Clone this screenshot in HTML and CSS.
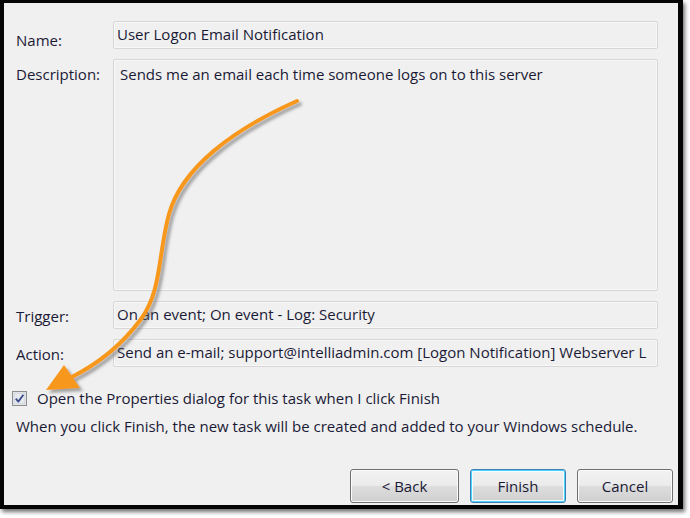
FILE: index.html
```html
<!DOCTYPE html>
<html>
<head>
<meta charset="utf-8">
<link rel="stylesheet" href="styles.css">
</head>
<body>
<div class="window">
  <div class="form">
    <div class="label first">Name:</div>
    <div class="field">User Logon Email Notification</div>
    <div class="label">Description:</div>
    <div class="field area">Sends me an email each time someone logs on to this server</div>
    <div class="label">Trigger:</div>
    <div class="field">On an event; On event - Log: Security</div>
    <div class="label">Action:</div>
    <div class="field">Send an e-mail; support@intelliadmin.com [Logon Notification] Webserver L</div>
  </div>
  <div class="check-row">
    <svg class="checkbox" width="15" height="15" viewBox="0 0 15 15">
      <rect x="0.5" y="0.5" width="14" height="14" fill="#f4f4f4" stroke="#8f8f8f"/>
      <rect x="2" y="2" width="11" height="11" fill="#e6e9ee" stroke="#c4cad3" stroke-width="0.8"/>
      <path d="M3.8 7.6 L6.3 10.6 L11.4 3.8" fill="none" stroke="#3b4d86" stroke-width="1.8" stroke-linejoin="round"/>
    </svg>
    <span>Open the Properties dialog for this task when I click Finish</span>
  </div>
  <p class="info">When you click Finish, the new task will be created and added to your Windows schedule.</p>
  <div class="buttons">
    <div class="btn back">&lt; Back</div>
    <div class="btn default">Finish</div>
    <div class="btn">Cancel</div>
  </div>
</div>
<svg class="arrow" width="690" height="518" viewBox="0 0 690 518">
  <defs>
    <filter id="sh" x="-20%" y="-20%" width="140%" height="140%">
      <feDropShadow dx="3" dy="3" stdDeviation="1.6" flood-color="#606060" flood-opacity="0.55"/>
    </filter>
  </defs>
  <g filter="url(#sh)">
    <path d="M297 101 C232 130 182 168 169 214 C158 254 162 290 141 319 C122 345 98 364 70 378" fill="none" stroke="#f7981d" stroke-width="4" stroke-linecap="round"/>
    <path d="M46 390 L64 365 L80 388 Z" fill="#f7981d"/>
  </g>
</svg>
</body>
</html>
```
FILE: styles.css
```css
html, body {
  margin: 0;
  padding: 0;
  background: #ffffff;
}
body {
  width: 690px;
  height: 518px;
  position: relative;
  overflow: hidden;
  font-family: "Open Sans", "Noto Sans", sans-serif;
  font-size: 15px;
  color: #1a1a36;
}
.window {
  box-sizing: border-box;
  width: 683px;
  height: 509px;
  border-style: solid;
  border-color: #050505;
  border-width: 3px 5px 4px 4px;
  background: #f0f0f0;
  box-shadow: 2px 3px 4px rgba(0,0,0,0.55);
  display: flex;
  flex-direction: column;
  padding: 18px 5px 2px 12px;
}
.form {
  display: grid;
  grid-template-columns: 97px 1fr;
  grid-template-rows: 28px 232px 28px 28px;
  row-gap: 10px;
  margin-right: 15px;
}
.label {
  padding-top: 5px;
  line-height: 20px;
  white-space: nowrap;
}
.label.first {
  padding-top: 9px;
}
.field {
  box-sizing: border-box;
  border: 1px solid #d6d6d6;
  box-shadow: inset 0 0 0 1px #f8f8f8;
  border-radius: 2px;
  background: #f0f0f0;
  padding: 2px 3px 0 3px;
  line-height: 20px;
  white-space: nowrap;
  overflow: hidden;
}
.field.area {
  padding: 4px 6px;
  white-space: normal;
}
.check-row {
  display: flex;
  align-items: center;
  gap: 10px;
  margin: 21px 0 0 -4px;
  line-height: 20px;
}
.checkbox {
  flex: none;
}
.info {
  margin: 8px 0 0 0;
  line-height: 20px;
}
.buttons {
  margin-top: auto;
  display: flex;
  justify-content: flex-end;
  gap: 11px;
}
.btn {
  box-sizing: border-box;
  width: 96px;
  height: 34px;
  border: 1px solid #707070;
  border-radius: 3px;
  background: linear-gradient(#f2f2f2 0%, #ebebeb 48%, #dddddd 52%, #cfcfcf 100%);
  box-shadow: inset 0 0 0 1px #fbfbfb;
  display: flex;
  align-items: center;
  justify-content: center;
  padding-bottom: 1px;
}
.btn.back {
  width: 109px;
}
.btn.default {
  border-color: #3c7fb1;
  box-shadow: inset 0 0 0 1px #48d4ff, inset 0 0 0 2px #f4fbff;
}
.arrow {
  position: absolute;
  left: 0;
  top: 0;
  pointer-events: none;
}
```
